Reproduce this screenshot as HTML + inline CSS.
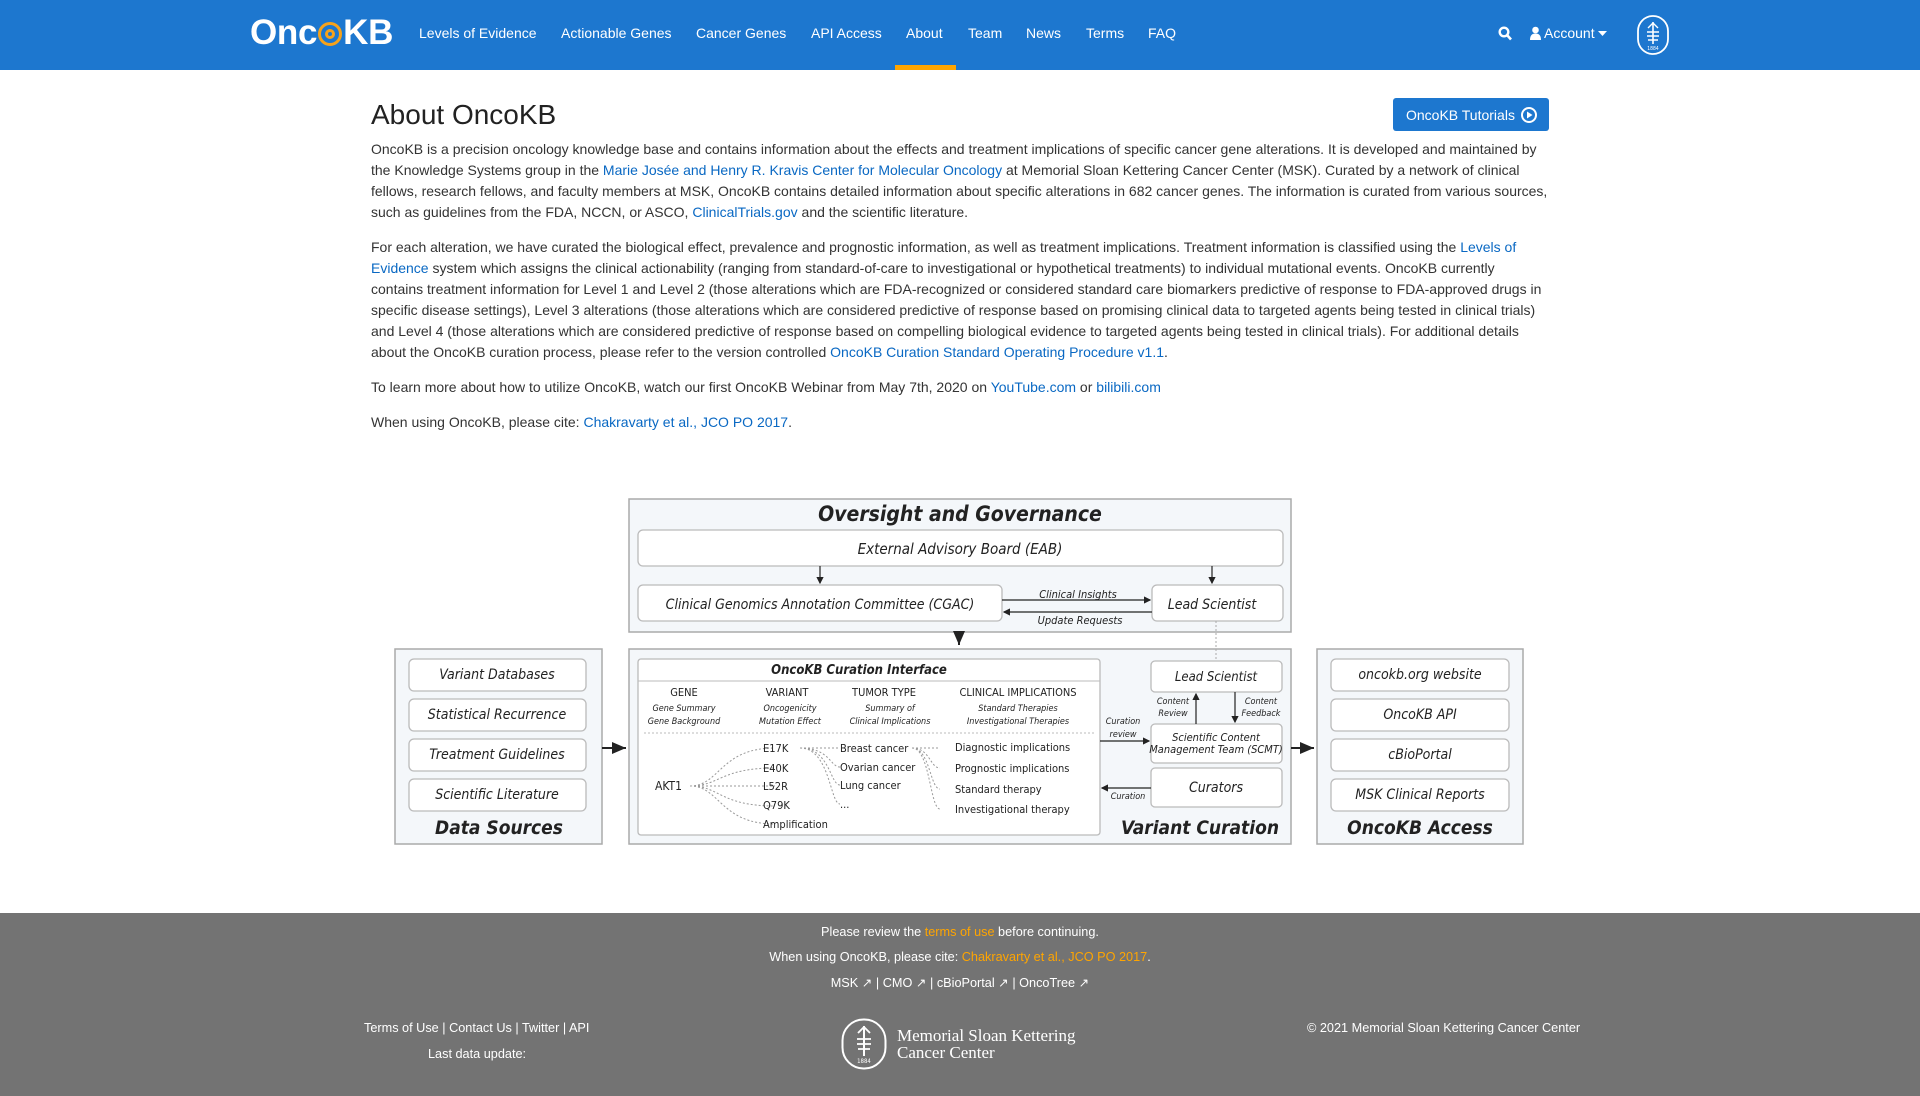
<!DOCTYPE html>
<html><head><meta charset="utf-8"><style>
*{margin:0;padding:0;box-sizing:border-box}
body{width:1920px;height:1096px;overflow:hidden;font-family:"Liberation Sans",Arial,sans-serif;color:#333;background:#fff;font-size:14px}
a{color:#0968c3;text-decoration:none}
.hdr{position:absolute;left:0;top:0;width:1920px;height:70px;background:#1d77cf}
.logo{position:absolute;left:250px;top:12px;color:#fff;font-weight:bold;font-size:35px;letter-spacing:-0.3px;line-height:42px}
.nav{position:absolute;top:0;height:70px;line-height:66px;color:#fff;font-size:14px}
.under{position:absolute;left:895px;top:65px;width:61px;height:5px;background:#ffa500}
h1{position:absolute;left:371px;top:98px;font-size:28px;font-weight:normal;color:#222;line-height:34px}
.btn{position:absolute;left:1393px;top:98px;width:156px;height:33px;background:#1d77cf;border-radius:3px;color:#fff;font-size:14px;line-height:35px;padding-left:13px}
p{position:absolute;left:371px;width:1176px;line-height:21px;font-size:14px}
.foot{position:absolute;left:0;top:913px;width:1920px;height:183px;background:#737373;color:#fff;font-size:12.7px}
.foot .c{position:absolute;width:100%;text-align:center}
.foot a{color:#ffa500}
svg text{font-family:"Liberation Sans Narrow","DejaVu Sans Condensed","Liberation Sans",sans-serif;fill:#222}
</style></head><body>
<div class="hdr">
<div class="logo">Onc<span style="display:inline-block;width:24px;height:24px;border-radius:50%;border:3px solid #f7a21a;position:relative;top:2px;margin:0 1px"><span style="position:absolute;left:4px;top:4px;width:10px;height:10px;border-radius:50%;border:3px solid #f7a21a"></span></span>KB</div>
<div class="nav" style="left:419px">Levels of Evidence</div>
<div class="nav" style="left:561px">Actionable Genes</div>
<div class="nav" style="left:696px">Cancer Genes</div>
<div class="nav" style="left:811px">API Access</div>
<div class="nav" style="left:906px">About</div>
<div class="nav" style="left:968px">Team</div>
<div class="nav" style="left:1026px">News</div>
<div class="nav" style="left:1086px">Terms</div>
<div class="nav" style="left:1148px">FAQ</div>
<svg style="position:absolute;left:1498px;top:26px" width="14" height="15" viewBox="0 0 14 15"><circle cx="6" cy="6" r="4.3" fill="none" stroke="#fff" stroke-width="2.4"/><line x1="9" y1="9" x2="13" y2="13.5" stroke="#fff" stroke-width="2.6"/></svg>
<svg style="position:absolute;left:1530px;top:26px" width="11" height="14" viewBox="0 0 11 14"><circle cx="5.5" cy="4" r="3.3" fill="#fff"/><path d="M0 14 Q0 7.5 5.5 7.5 Q11 7.5 11 14Z" fill="#fff"/></svg>
<div class="nav" style="left:1544px">Account</div>
<svg style="position:absolute;left:1598px;top:31px" width="9" height="6"><path d="M0 0H9L4.5 5Z" fill="#fff"/></svg>
<svg style="position:absolute;left:1637px;top:15px" width="32" height="40" viewBox="0 0 32 40"><rect x="1" y="1" width="30" height="38" rx="15" fill="none" stroke="#fff" stroke-width="1.8"/><line x1="16" y1="7" x2="16" y2="29" stroke="#fff" stroke-width="1.6"/><path d="M11 13L16 8L21 13M10 17H22M10 21H22M11 25H21" stroke="#fff" stroke-width="1.4" fill="none"/><text x="16" y="35" font-size="5" fill="#fff" text-anchor="middle" style="fill:#fff">1884</text></svg>
<div class="under"></div>
</div>

<h1>About OncoKB</h1>
<div class="btn">OncoKB Tutorials <svg style="position:absolute;left:128px;top:9px" width="16" height="16" viewBox="0 0 16 16"><circle cx="8" cy="8" r="7" fill="none" stroke="#fff" stroke-width="2"/><path d="M6 4.5L11.5 8L6 11.5Z" fill="#fff"/></svg></div>

<p style="top:139px;width:1182px">OncoKB is a precision oncology knowledge base and contains information about the effects and treatment implications of specific cancer gene alterations. It is developed and maintained by the Knowledge Systems group in the <a>Marie Josée and Henry R. Kravis Center for Molecular Oncology</a> at Memorial Sloan Kettering Cancer Center (MSK). Curated by a network of clinical fellows, research fellows, and faculty members at MSK, OncoKB contains detailed information about specific alterations in 682 cancer genes. The information is curated from various sources, such as guidelines from the FDA, NCCN, or ASCO, <a>ClinicalTrials.gov</a> and the scientific literature.</p>
<p style="top:237px">For each alteration, we have curated the biological effect, prevalence and prognostic information, as well as treatment implications. Treatment information is classified using the <a>Levels of Evidence</a> system which assigns the clinical actionability (ranging from standard-of-care to investigational or hypothetical treatments) to individual mutational events. OncoKB currently contains treatment information for Level 1 and Level 2 (those alterations which are FDA-recognized or considered standard care biomarkers predictive of response to FDA-approved drugs in specific disease settings), Level 3 alterations (those alterations which are considered predictive of response based on promising clinical data to targeted agents being tested in clinical trials) and Level 4 (those alterations which are considered predictive of response based on compelling biological evidence to targeted agents being tested in clinical trials). For additional details about the OncoKB curation process, please refer to the version controlled <a>OncoKB Curation Standard Operating Procedure v1.1</a>.</p>
<p style="top:377px">To learn more about how to utilize OncoKB, watch our first OncoKB Webinar from May 7th, 2020 on <a>YouTube.com</a> or <a>bilibili.com</a></p>
<p style="top:412px">When using OncoKB, please cite: <a>Chakravarty et al., JCO PO 2017</a>.</p>

<svg style="position:absolute;left:0;top:0" width="1920" height="913" viewBox="0 0 1920 913">
<defs><marker id="ah" markerWidth="8" markerHeight="8" refX="7" refY="4" orient="auto"><path d="M0 1L7 4L0 7Z" fill="#222"/></marker>
<marker id="ab" markerWidth="6" markerHeight="6" refX="5" refY="3" orient="auto"><path d="M0 0L6 3L0 6Z" fill="#222"/></marker></defs>
<g stroke="#aaa" stroke-width="1.5" fill="#f4f7fa">
<rect x="629" y="499" width="662" height="133"/>
<rect x="395" y="649" width="207" height="195"/>
<rect x="629" y="649" width="662" height="195"/>
<rect x="1317" y="649" width="206" height="195"/>
</g>
<g stroke="#bbb" stroke-width="1.3" fill="#fff">
<rect x="638" y="530" width="645" height="36" rx="5"/>
<rect x="638" y="585" width="364" height="36" rx="5"/>
<rect x="1152" y="585" width="131" height="36" rx="5"/>
<rect x="409" y="659" width="177" height="32" rx="5"/>
<rect x="409" y="699" width="177" height="32" rx="5"/>
<rect x="409" y="739" width="177" height="32" rx="5"/>
<rect x="409" y="779" width="177" height="32" rx="5"/>
<rect x="1331" y="659" width="178" height="32" rx="5"/>
<rect x="1331" y="699" width="178" height="32" rx="5"/>
<rect x="1331" y="739" width="178" height="32" rx="5"/>
<rect x="1331" y="779" width="178" height="32" rx="5"/>
<rect x="638" y="659" width="462" height="176" rx="3"/>
<rect x="1151" y="661" width="131" height="31" rx="4"/>
<rect x="1151" y="724" width="131" height="39" rx="4"/>
<rect x="1151" y="768" width="131" height="39" rx="4"/>
</g>
<line x1="638" y1="681" x2="1100" y2="681" stroke="#bbb"/>
<line x1="644" y1="733" x2="1094" y2="733" stroke="#bbb" stroke-dasharray="2,2"/>
<g stroke="#222" stroke-width="1.2">
<line x1="820" y1="566" x2="820" y2="583" marker-end="url(#ab)"/>
<line x1="1212" y1="566" x2="1212" y2="583" marker-end="url(#ab)"/>
<line x1="1002" y1="600" x2="1150" y2="600" marker-end="url(#ab)"/>
<line x1="1152" y1="612" x2="1004" y2="612" marker-end="url(#ab)"/>
<line x1="1100" y1="741" x2="1149" y2="741" marker-end="url(#ab)"/>
<line x1="1151" y1="788" x2="1102" y2="788" marker-end="url(#ab)"/>
<line x1="1196" y1="724" x2="1196" y2="694" marker-end="url(#ab)"/>
<line x1="1235" y1="692" x2="1235" y2="722" marker-end="url(#ab)"/>
</g>
<g stroke="#222" stroke-width="2">
<line x1="959" y1="632" x2="959" y2="645" marker-end="url(#ah)"/>
<line x1="602" y1="748" x2="626" y2="748" marker-end="url(#ah)"/>
<line x1="1291" y1="748" x2="1314" y2="748" marker-end="url(#ah)"/>
</g>
<line x1="1216" y1="621" x2="1216" y2="661" stroke="#aaa" stroke-dasharray="2,2"/>
<g stroke="#999" stroke-dasharray="2,2" fill="none">
<path d="M690 786C720 786 720 748 775 748M690 786C720 786 720 768 775 768M690 786H775M690 786C720 786 720 806 775 806M690 786C720 786 720 824 775 824"/>
<path d="M800 748H838M800 748C830 748 830 767 840 767M800 748C830 748 830 785 840 785M800 748C830 748 830 804 840 804"/>
<path d="M912 748H940M912 748C930 748 930 768 940 768M912 748C930 748 930 789 940 789M912 748C930 748 930 809 940 809"/>
</g>
<g text-anchor="middle" font-style="italic">
<text x="960" y="521" font-size="21" font-weight="bold">Oversight and Governance</text>
<text x="960" y="554" font-size="15">External Advisory Board (EAB)</text>
<text x="820" y="609" font-size="14">Clinical Genomics Annotation Committee (CGAC)</text>
<text x="1212" y="609" font-size="14">Lead Scientist</text>
<text x="1078" y="598" font-size="11">Clinical Insights</text>
<text x="1080" y="624" font-size="11">Update Requests</text>
<text x="497" y="679" font-size="14">Variant Databases</text>
<text x="497" y="719" font-size="14">Statistical Recurrence</text>
<text x="497" y="759" font-size="14">Treatment Guidelines</text>
<text x="497" y="799" font-size="14">Scientific Literature</text>
<text x="499" y="834" font-size="19" font-weight="bold">Data Sources</text>
<text x="1420" y="679" font-size="14">oncokb.org website</text>
<text x="1420" y="719" font-size="14">OncoKB API</text>
<text x="1420" y="759" font-size="14">cBioPortal</text>
<text x="1420" y="799" font-size="14">MSK Clinical Reports</text>
<text x="1420" y="834" font-size="19" font-weight="bold">OncoKB Access</text>
<text x="1200" y="834" font-size="19" font-weight="bold">Variant Curation</text>
<text x="859" y="674" font-size="13" font-weight="bold">OncoKB Curation Interface</text>
<text x="1216" y="681" font-size="13">Lead Scientist</text>
<text x="1216" y="741" font-size="11">Scientific Content</text>
<text x="1216" y="753" font-size="11">Management Team (SCMT)</text>
<text x="1216" y="792" font-size="14">Curators</text>
<text x="1173" y="704" font-size="9">Content</text>
<text x="1173" y="716" font-size="9">Review</text>
<text x="1261" y="704" font-size="9">Content</text>
<text x="1261" y="716" font-size="9">Feedback</text>
<text x="1123" y="724" font-size="9">Curation</text>
<text x="1123" y="737" font-size="9">review</text>
<text x="1128" y="799" font-size="9">Curation</text>
<text x="684" y="711" font-size="9">Gene Summary</text><text x="684" y="724" font-size="9">Gene Background</text>
<text x="790" y="711" font-size="9">Oncogenicity</text><text x="790" y="724" font-size="9">Mutation Effect</text>
<text x="890" y="711" font-size="9">Summary of</text><text x="890" y="724" font-size="9">Clinical Implications</text>
<text x="1018" y="711" font-size="9">Standard Therapies</text><text x="1018" y="724" font-size="9">Investigational Therapies</text>
</g>
<g font-size="11">
<text x="684" y="696" text-anchor="middle">GENE</text>
<text x="787" y="696" text-anchor="middle">VARIANT</text>
<text x="884" y="696" text-anchor="middle">TUMOR TYPE</text>
<text x="1018" y="696" text-anchor="middle">CLINICAL IMPLICATIONS</text>
<text x="655" y="790" font-size="12">AKT1</text>
<text x="763" y="752">E17K</text><text x="763" y="772">E40K</text><text x="763" y="790">L52R</text><text x="763" y="809">Q79K</text><text x="763" y="828">Amplification</text>
<text x="840" y="752">Breast cancer</text><text x="840" y="771">Ovarian cancer</text><text x="840" y="789">Lung cancer</text><text x="840" y="808">...</text>
<text x="955" y="751">Diagnostic implications</text><text x="955" y="772">Prognostic implications</text><text x="955" y="793">Standard therapy</text><text x="955" y="813">Investigational therapy</text>
</g>
</svg>

<div class="foot">
<div class="c" style="top:12px">Please review the <a>terms of use</a> before continuing.</div>
<div class="c" style="top:37px">When using OncoKB, please cite: <a>Chakravarty et al., JCO PO 2017</a>.</div>
<div class="c" style="top:62px">MSK ↗ | CMO ↗ | cBioPortal ↗ | OncoTree ↗</div>
<div style="position:absolute;left:364px;top:108px">Terms of Use | Contact Us | Twitter | API</div>
<div style="position:absolute;left:428px;top:134px">Last data update:</div>
<div style="position:absolute;left:1307px;top:108px">© 2021 Memorial Sloan Kettering Cancer Center</div>
<svg style="position:absolute;left:841px;top:105px" width="46" height="52" viewBox="0 0 46 52"><rect x="1.5" y="1.5" width="43" height="49" rx="21" fill="none" stroke="#fff" stroke-width="2"/><line x1="23" y1="8" x2="23" y2="38" stroke="#fff" stroke-width="2"/><path d="M17 15L23 9L29 15M16 21H30M16 26H30M17 31H29" stroke="#fff" stroke-width="1.8" fill="none"/><text x="23" y="45" font-size="6" text-anchor="middle" style="fill:#fff">1884</text></svg>
<div style="position:absolute;left:897px;top:114px;font-family:'Liberation Serif',serif;font-size:17px;line-height:17px">Memorial Sloan Kettering<br>Cancer Center</div>
</div>
</body></html>
